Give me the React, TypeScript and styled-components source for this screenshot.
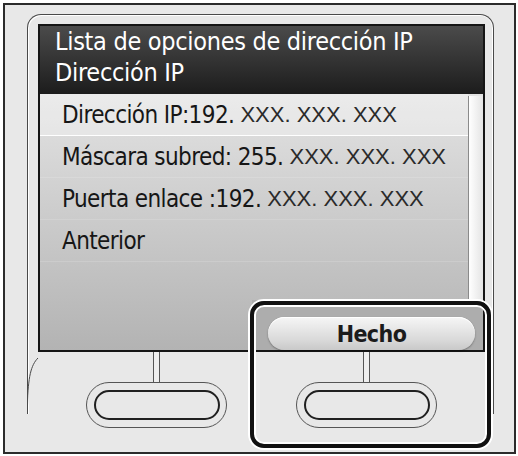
import styled, { createGlobalStyle } from 'styled-components';

const GlobalStyle = createGlobalStyle`
  html, body {
    margin: 0;
    padding: 0;
    background: #ffffff;
  }
  * {
    box-sizing: border-box;
  }
`;

const narrow = `"Liberation Sans Narrow", "DejaVu Sans Condensed", "Roboto Condensed", "Liberation Sans", sans-serif`;

const Frame = styled.div`
  position: relative;
  margin: 3px 0 0 3px;
  width: 513px;
  height: 451px;
  border: 2px solid #2b2b2b;
  background: #e8e8e8;
  overflow: hidden;
`;

const Bezel = styled.div`
  display: flex;
  flex-direction: column;
  margin: 9px 0 0 22px;
  width: 467px;
  height: 400px;
  padding: 9px 0 0 10px;
  border: 1px solid #4a4a4a;
  border-bottom: none;
  border-radius: 14px 14px 0 0;
  box-shadow: inset 1px 1px 0 #ffffff, inset -1px 0 0 #ffffff;
`;

const Screen = styled.div`
  display: flex;
  flex-direction: column;
  width: 447px;
  height: 335px;
  border: 2px solid #151515;
  background: linear-gradient(#efefef, #b3b3b3);
`;

const Header = styled.div`
  height: 68px;
  padding: 0 0 0 15px;
  background: linear-gradient(#4b4b4b, #1c1c1c);
  color: #ffffff;
  font-family: ${narrow};
  font-stretch: condensed;
  font-size: 25px;
  line-height: 31px;
  letter-spacing: -0.3px;
`;

const Body = styled.div`
  display: flex;
  flex: 1;
  flex-direction: column;
`;

const ListArea = styled.div`
  display: flex;
  height: 206px;
`;

const List = styled.div`
  display: flex;
  flex: 1;
  flex-direction: column;
`;

const Row = styled.div<{ $selected?: boolean }>`
  display: flex;
  align-items: center;
  height: 42px;
  padding-left: 22px;
  border-bottom: 1px solid ${(p) => (p.$selected ? '#ffffff' : 'rgba(255,255,255,0.15)')};
  background: ${(p) => (p.$selected ? 'rgba(255,255,255,0.3)' : 'transparent')};
  color: #161616;
  font-family: ${narrow};
  font-stretch: condensed;
  font-size: 24px;
  letter-spacing: -0.6px;
  white-space: pre;
`;

const Masked = styled.span`
  color: #2a2a2a;
  font-family: "Liberation Sans", Arial, sans-serif;
  font-stretch: normal;
  font-size: 22px;
  letter-spacing: 0;
`;

const Scrollbar = styled.div`
  width: 15px;
  margin-top: 2px;
  border-left: 1px solid #8a8a8a;
  background: linear-gradient(90deg, #ffffff, #e4e4e4);
`;

const BottomBar = styled.div`
  display: flex;
  flex: 1;
  justify-content: flex-end;
`;

const DoneCell = styled.div`
  width: 231px;
  padding: 17px 8px 0 16px;
  background: #adadad;
`;

const DoneButton = styled.div`
  display: flex;
  align-items: center;
  justify-content: center;
  height: 33px;
  border-radius: 17px;
  background: linear-gradient(#f6f6f6, #d9d9d9 70%, #c9c9c9);
  box-shadow: 0 1px 2px rgba(0, 0, 0, 0.35), inset 0 1px 0 #ffffff;
  color: #1b1b1b;
  font-family: ${narrow};
  font-stretch: condensed;
  font-weight: bold;
  font-size: 23px;
  letter-spacing: -0.6px;
`;

const Keys = styled.div`
  display: flex;
  justify-content: center;
  width: 447px;
`;

const KeyCell = styled.div`
  display: flex;
  flex-direction: column;
  align-items: center;
  width: 210px;
`;

const Stem = styled.div`
  width: 7px;
  height: 30px;
  border-left: 1px solid #555555;
  border-right: 1px solid #555555;
  background: #eeeeee;
`;

const KeyOuter = styled.div`
  display: flex;
  align-items: center;
  justify-content: center;
  width: 141px;
  height: 46px;
  border: 1px solid #555555;
  border-radius: 23px;
  background: #e8e8e8;
`;

const KeyInner = styled.div`
  width: 126px;
  height: 30px;
  border: 2.5px solid #202020;
  border-radius: 15px;
`;

const Highlight = styled.div`
  position: absolute;
  left: 245px;
  top: 296px;
  width: 241px;
  height: 147px;
  border: 4px solid #111111;
  border-radius: 14px;
  box-shadow: 0 0 0 2px #ffffff, inset 0 0 0 2px #ffffff;
  pointer-events: none;
`;

const Curve = styled.svg`
  position: absolute;
  left: 0;
  top: 0;
  pointer-events: none;
`;

export default function App() {
  return (
    <>
      <GlobalStyle />
      <Frame>
        <Bezel>
          <Screen>
            <Header>
              Lista de opciones de dirección IP
              <br />
              Dirección IP
            </Header>
            <Body>
              <ListArea>
                <List>
                  <Row $selected>
                    Dirección IP:192.<Masked> XXX. XXX. XXX</Masked>
                  </Row>
                  <Row>
                    Máscara subred: 255.<Masked> XXX. XXX. XXX</Masked>
                  </Row>
                  <Row>
                    Puerta enlace :192.<Masked> XXX. XXX. XXX</Masked>
                  </Row>
                  <Row>Anterior</Row>
                </List>
                <Scrollbar />
              </ListArea>
              <BottomBar>
                <DoneCell>
                  <DoneButton>Hecho</DoneButton>
                </DoneCell>
              </BottomBar>
            </Body>
          </Screen>
          <Keys>
            <KeyCell>
              <Stem />
              <KeyOuter>
                <KeyInner />
              </KeyOuter>
            </KeyCell>
            <KeyCell>
              <Stem />
              <KeyOuter>
                <KeyInner />
              </KeyOuter>
            </KeyCell>
          </Keys>
        </Bezel>
        <Curve width="60" height="420" viewBox="0 0 60 420">
          <path d="M33 353 C 26 360, 23 372, 22.5 400" fill="none" stroke="#4a4a4a" strokeWidth="1" />
        </Curve>
        <Highlight />
      </Frame>
    </>
  );
}
